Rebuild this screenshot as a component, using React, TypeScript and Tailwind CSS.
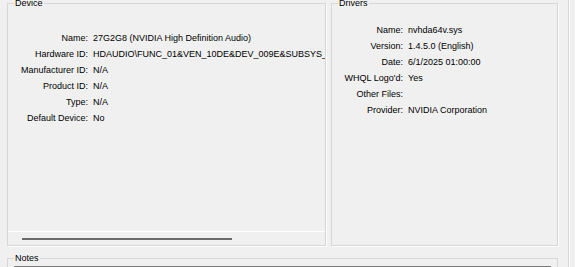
const deviceRows: [string, string][] = [
  ["Name:", "27G2G8 (NVIDIA High Definition Audio)"],
  ["Hardware ID:", "HDAUDIO\\FUNC_01&VEN_10DE&DEV_009E&SUBSYS_103C8B3F&REV_1001"],
  ["Manufacturer ID:", "N/A"],
  ["Product ID:", "N/A"],
  ["Type:", "N/A"],
  ["Default Device:", "No"],
];

const driverRows: [string, string][] = [
  ["Name:", "nvhda64v.sys"],
  ["Version:", "1.4.5.0 (English)"],
  ["Date:", "6/1/2025 01:00:00"],
  ["WHQL Logo'd:", "Yes"],
  ["Other Files:", ""],
  ["Provider:", "NVIDIA Corporation"],
];

const InfoRow = ({ label, value, labelWidth }: { label: string; value: string; labelWidth: string }) => (
  <div className="flex h-[16px] items-center whitespace-nowrap leading-[12px]">
    <span className={`${labelWidth} shrink-0 text-right`}>{label}</span>
    <span className="pl-[5px]">{value}</span>
  </div>
);

const GroupLabel = ({ text }: { text: string }) => (
  <span className="absolute left-[6px] top-[-7px] bg-[#f0f0f0] px-[1px] leading-[12px]">{text}</span>
);

export default function App() {
  return (
    <div
      className="flex h-[267px] w-[575px] overflow-hidden bg-[#f0f0f0] text-[9px] text-black"
      style={{ fontFamily: '"Liberation Sans", Arial, sans-serif' }}
    >
      <div className="flex w-[568px] flex-col pl-[7px] pt-[3px]">
        <div className="flex h-[243px] gap-[5px]">
          {/* Device */}
          <div className="relative flex w-[319px] flex-col border border-[#d6d6d6] shadow-[1px_1px_0_#fff]">
            <GroupLabel text="Device" />
            <div className="flex h-[228px] flex-col overflow-hidden border-b border-white pt-[26px] pr-[2px]">
              {deviceRows.map(([l, v]) => (
                <InfoRow key={l} label={l} value={v} labelWidth="w-[80px]" />
              ))}
            </div>
            <div className="flex flex-1 items-center pl-[14px]">
              <div className="h-[2px] w-[210px] bg-[#6a6a6a]" />
            </div>
          </div>
          {/* Drivers */}
          <div className="relative flex w-[227px] flex-col border border-[#d6d6d6] pt-[18px] shadow-[1px_1px_0_#fff]">
            <GroupLabel text="Drivers" />
            {driverRows.map(([l, v]) => (
              <InfoRow key={l} label={l} value={v} labelWidth="w-[71px]" />
            ))}
          </div>
        </div>
        {/* Notes */}
        <div className="relative mt-[12px] w-[551px] flex-1 border-l border-t border-r border-[#d6d6d6] px-[6px] pt-[7px]">
          <GroupLabel text="Notes" />
          <div className="h-full border-t border-[#7a7a7a] bg-white" />
        </div>
      </div>
      <div className="w-[1px] bg-[#d6d6d6]" />
      <div className="w-[1px] bg-white" />
    </div>
  );
}
